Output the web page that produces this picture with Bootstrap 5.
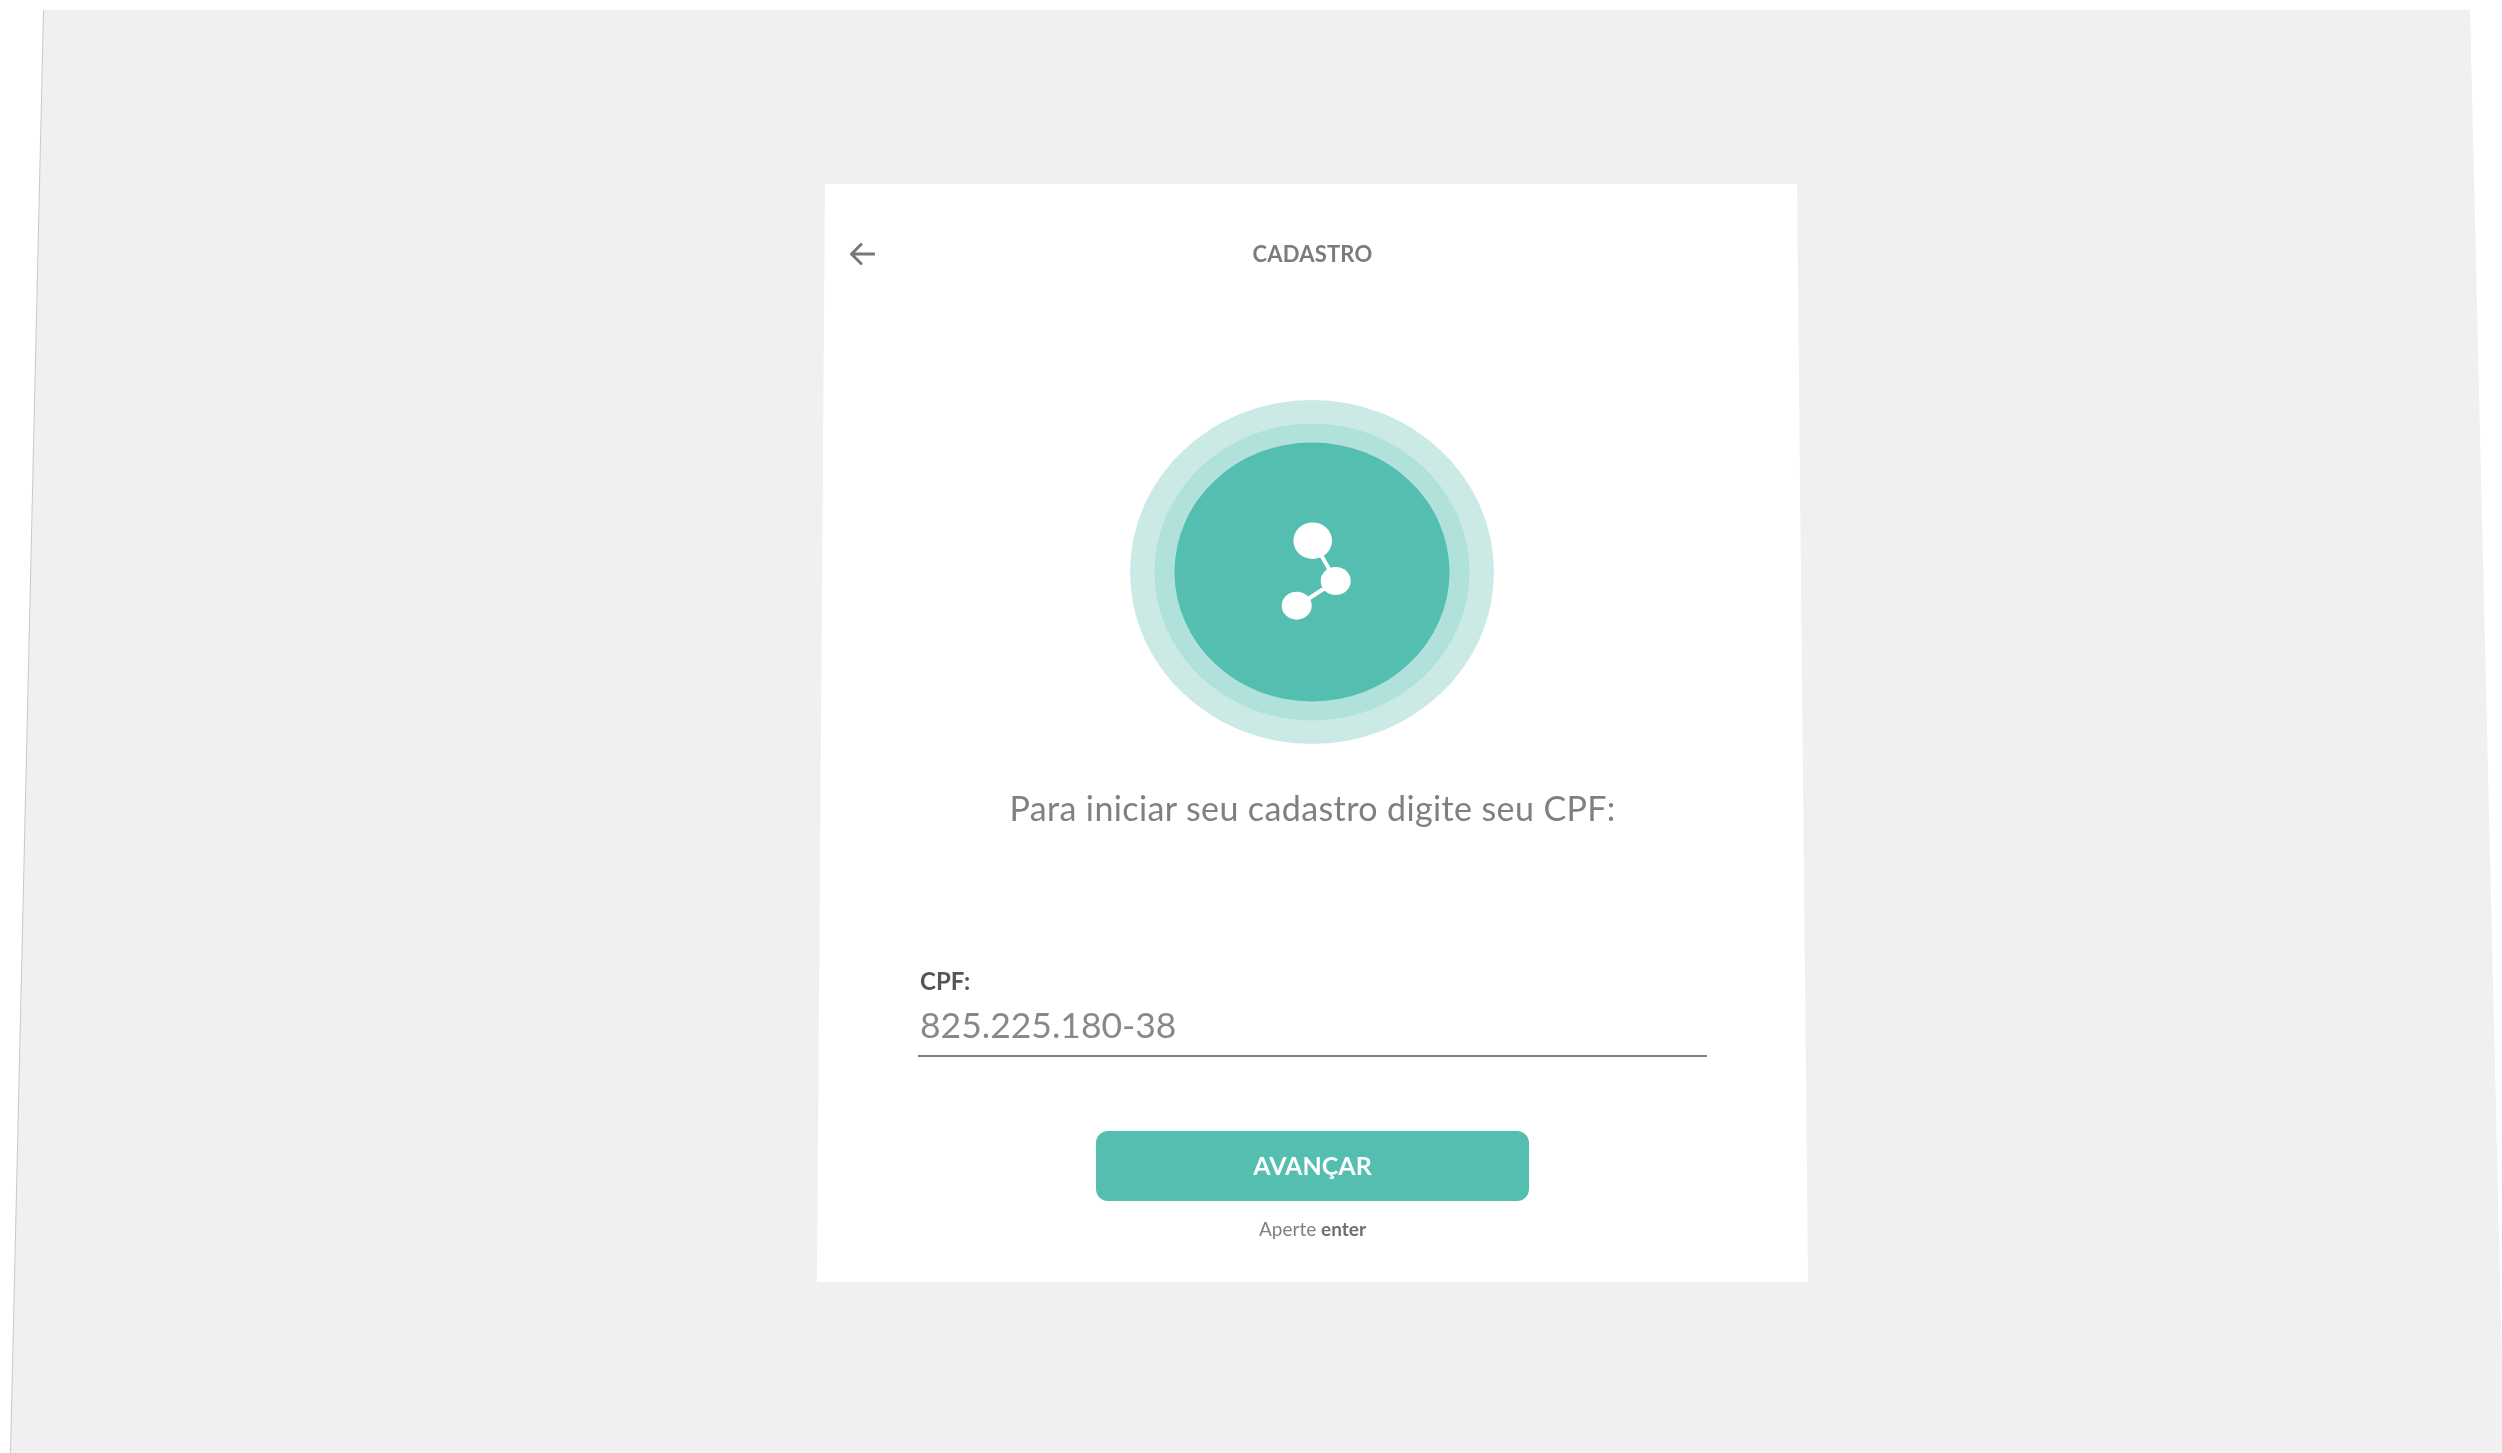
<!DOCTYPE html>
<html lang="pt-BR">
<head>
    <meta charset="UTF-8">
    <meta name="viewport" content="width=device-width, initial-scale=1.0">
    <title>Cadastro</title>
    <link href="https://cdn.jsdelivr.net/npm/bootstrap@5.3.0/dist/css/bootstrap.min.css" rel="stylesheet">
    <style>
        body {
            font-family: Lato, "Noto Sans", Arial, sans-serif;
            background-color: #fff;
            color: #808080;
            overflow: hidden;
        }
        .page-edge {
            padding-top: 10px;
            filter: drop-shadow(-1px 0 0 #c9c9c9);
        }
        .page-bg {
            height: 1443px;
            padding-top: 174px;
            padding-left: 817px;
            background: #f0f0f0;
            clip-path: polygon(44px 0, 2470px 0, 2502px 1355px, 2502px 100%, 11px 100%);
        }
        .signup-card {
            width: 991px;
            height: 1098px;
            padding-top: 49px;
            background: #fff;
            clip-path: polygon(8px 0, 980px 0, 991px 100%, 0 100%);
        }
        .signup-header {
            display: grid;
            grid-template-columns: 1fr auto 1fr;
            align-items: center;
            height: 40px;
        }
        .signup-title {
            font-size: 22px;
            font-weight: 700;
            letter-spacing: .2px;
            color: #7b7b7b;
        }
        .back-btn {
            width: 25px;
            height: 22px;
            margin: 2px 0 0 33px;
            padding: 0;
            border: 0;
            background: none;
            line-height: 0;
        }
        .rings {
            display: block;
            margin: 127px 0 0 313px;
        }
        .intro-text {
            margin: 44px 0 0;
            font-size: 34px;
            line-height: 40px;
            letter-spacing: .39px;
            text-align: center;
        }
        .cpf-field {
            width: 789px;
            margin: 138px auto 0;
        }
        .cpf-label {
            display: block;
            margin: 4px 0 0 2px;
            font-size: 24px;
            line-height: 30px;
            font-weight: 700;
            color: #555;
        }
        .cpf-input.form-control {
            height: 61px;
            padding: 0 2px 2px;
            border: 0;
            border-bottom: 2px solid #808080;
            border-radius: 0;
            background: none;
            box-shadow: none;
            font-family: inherit;
            font-size: 35.5px;
            color: #888;
        }
        .next-btn.btn {
            display: block;
            width: 433px;
            height: 70px;
            margin: 74px auto 0;
            border: 0;
            border-radius: 12px;
            background: #54bfb0;
            color: #fff;
            font-size: 25px;
            font-weight: 700;
        }
        .enter-hint {
            margin: 16px 0 0;
            font-size: 19px;
            line-height: 24px;
            text-align: center;
        }
        .enter-hint strong {
            color: #6f6f6f;
        }
    </style>
</head>
<body class="m-0">
    <div class="page-edge">
        <div class="page-bg">
            <main class="signup-card">
                <div class="signup-header">
                    <button class="back-btn justify-self-start" type="button" aria-label="Voltar">
                        <svg width="25" height="22" viewBox="0 0 25 22" fill="none" stroke="#777" stroke-width="3" stroke-linecap="round" stroke-linejoin="round">
                            <path d="M24 11H2M11 1.5 1.5 11 11 20.5"/>
                        </svg>
                    </button>
                    <div class="signup-title">CADASTRO</div>
                    <div></div>
                </div>

                <svg class="rings" width="364" height="344" viewBox="0 0 364 344" aria-hidden="true">
                    <ellipse cx="182" cy="172" rx="182" ry="172" fill="#cbeae6"/>
                    <ellipse cx="182" cy="172" rx="157.5" ry="148.5" fill="#b0e2db"/>
                    <ellipse cx="182" cy="172" rx="137.5" ry="129.5" fill="#54bfb0"/>
                    <path d="M183 141 206 181 167 206" fill="none" stroke="#fff" stroke-width="4"/>
                    <ellipse cx="182.7" cy="140.7" rx="19.3" ry="18.3" fill="#fff"/>
                    <ellipse cx="205.7" cy="181" rx="15" ry="14" fill="#fff"/>
                    <ellipse cx="166.7" cy="205.7" rx="15" ry="14" fill="#fff"/>
                </svg>

                <p class="intro-text">Para iniciar seu cadastro digite seu CPF:</p>

                <div class="cpf-field">
                    <label class="cpf-label" for="cpf">CPF:</label>
                    <input class="cpf-input form-control" id="cpf" type="text" value="825.225.180-38">
                </div>

                <button class="next-btn btn" type="button">AVANÇAR</button>
                <p class="enter-hint">Aperte <strong>enter</strong></p>
            </main>
        </div>
    </div>
    <script src="https://cdn.jsdelivr.net/npm/bootstrap@5.3.0/dist/js/bootstrap.bundle.min.js"></script>
</body>
</html>
